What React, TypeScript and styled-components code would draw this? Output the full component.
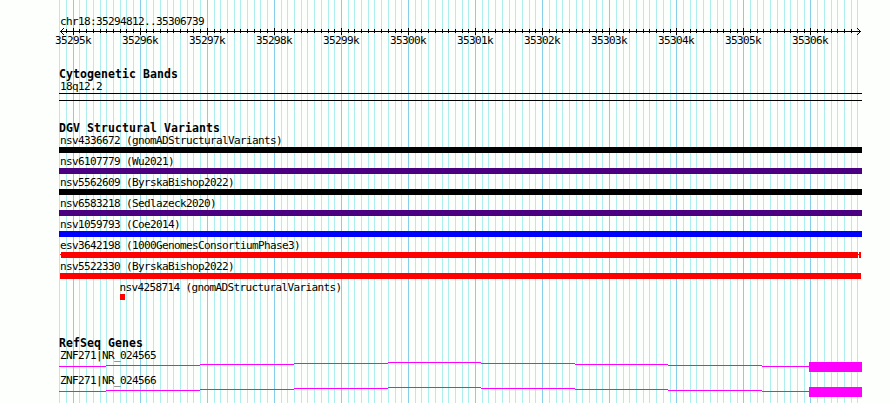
import React from "react";
import styled, { createGlobalStyle } from "styled-components";

const GlobalStyle = createGlobalStyle`
  body { margin: 0; background: #fdfffc; }
`;

const Browser = styled.main`
  position: relative;
  box-sizing: border-box;
  width: 890px;
  height: 403px;
  padding-top: 15px;
  overflow: hidden;
  background: #fdfffc;
  color: #000;
  font-family: "DejaVu Sans Mono", "Liberation Mono", monospace;
`;

const GridLines = styled.svg`
  position: absolute;
  inset: 0;
`;

const Content = styled.div`
  position: relative;
  width: 803px;
  margin-left: 59px;
`;

const Label = styled.div<{ $indent?: number }>`
  height: 13px;
  padding-left: ${(p) => p.$indent ?? 1}px;
  font-size: 11px;
  line-height: 13px;
  letter-spacing: -0.622px;
  white-space: pre;
`;

const Heading = styled.h2`
  height: 12px;
  margin: 0;
  font-size: 11.5px;
  font-weight: 700;
  line-height: 13px;
  letter-spacing: 0.077px;
  white-space: pre;
`;

const Drawing = styled.svg`
  display: block;
  overflow: visible;
`;

const Scale = styled.header`
  height: 53px;
`;

const RegionName = styled(Label)`
  height: 12px;
`;

const ScaleLabels = styled.div`
  display: grid;
  grid-template-columns: repeat(12, 67px);
  margin-left: -5px;
  margin-top: -2px;
`;

const Track = styled.section<{ $height: number }>`
  height: ${(p) => p.$height}px;
`;

const Band = styled.div`
  height: 6px;
  border: solid #000;
  border-width: 1px 0;
`;

const VariantRow = styled.div`
  height: 21px;
`;

const Bar = styled.div<{ $color: string; $start: number; $width: number }>`
  width: ${(p) => p.$width}px;
  height: 6px;
  margin-left: ${(p) => p.$start}px;
  background: ${(p) => p.$color};
`;

const SplitBar = styled.div`
  display: flex;
  height: 6px;
  margin-left: 1px;
`;

const Piece = styled.div<{ $width: number; $thin?: boolean }>`
  width: ${(p) => p.$width}px;
  height: ${(p) => (p.$thin ? 1 : 6)}px;
  margin-top: ${(p) => (p.$thin ? 2 : 0)}px;
  background: #f00;
`;

const GeneRow = styled.div`
  height: 25px;
`;

const ORIGIN = 73.18;
const STEP = 6.7065;
const ticks = Array.from({ length: 120 }, (_, i) => i - 2).map((k) => ({
  x: Math.floor(ORIGIN + k * STEP),
  major: k % 10 === 0,
}));

const variants = [
  { name: "nsv4336672 (gnomADStructuralVariants)", color: "#000", start: 0, width: 803 },
  { name: "nsv6107779 (Wu2021)", color: "#4b0082", start: 0, width: 803 },
  { name: "nsv5562609 (ByrskaBishop2022)", color: "#000", start: 0, width: 803 },
  { name: "nsv6583218 (Sedlazeck2020)", color: "#4b0082", start: 0, width: 803 },
  { name: "nsv1059793 (Coe2014)", color: "#00f", start: 0, width: 803 },
  { name: "esv3642198 (1000GenomesConsortiumPhase3)", split: true, color: "#f00", start: 1, width: 801 },
  { name: "nsv5522330 (ByrskaBishop2022)", color: "#f00", start: 1, width: 801 },
  { name: "nsv4258714 (gnomADStructuralVariants)", color: "#f00", start: 61, width: 5, indent: 60.5 },
];

// Each intron segment: start, end and height of its step.
const introns = [
  [0, 47, 4],
  [47, 141, 3],
  [141, 235, 2],
  [235, 329, 1],
  [329, 422, 0],
  [422, 516, 1],
  [516, 609, 2],
  [609, 703, 3],
  [703, 750, 4],
];

function Grid() {
  return (
    <GridLines width="890" height="403" shapeRendering="crispEdges">
      {ticks.map(({ x, major }) => (
        <rect key={x} x={x} y="0" width="1" height="403" fill={major ? "#87ceeb" : "#afeeee"} />
      ))}
    </GridLines>
  );
}

function Ruler() {
  return (
    <Drawing width="803" height="9" shapeRendering="crispEdges">
      <rect x="1" y="4" width="801" height="1" />
      {ticks.slice(1, -1).map(({ x, major }) => (
        <rect key={x} x={x - 59} y={major ? 1 : 2} width="1" height={major ? 7 : 4} />
      ))}
      <path d="M2 3h1v1h-1zM3 2h1v1h-1zM4 1h1v1h-1zM2 5h1v1h-1zM3 6h1v1h-1zM4 7h1v1h-1z" />
      <path d="M800 3h1v1h-1zM799 2h1v1h-1zM798 1h1v1h-1zM800 5h1v1h-1zM799 6h1v1h-1zM798 7h1v1h-1z" />
    </Drawing>
  );
}

export default function App() {
  return (
    <>
      <GlobalStyle />
      <Browser>
        <Grid />
        <Content>
          <Scale>
            <RegionName>chr18:35294812..35306739</RegionName>
            <Ruler />
            <ScaleLabels>
              {Array.from({ length: 12 }, (_, i) => (
                <Label key={i}>{`${35295 + i}k`}</Label>
              ))}
            </ScaleLabels>
          </Scale>
          <Track $height={54}>
            <Heading>Cytogenetic Bands</Heading>
            <Label>18q12.2</Label>
            <Band />
          </Track>
          <Track $height={215}>
            <Heading>DGV Structural Variants</Heading>
            {variants.map((v) => (
              <VariantRow key={v.name}>
                <Label $indent={v.indent}>{v.name}</Label>
                {v.split ? (
                  <SplitBar>
                    <Piece $width={1} $thin />
                    <Piece $width={797} />
                    <Piece $width={1} $thin />
                    <Piece $width={2} />
                  </SplitBar>
                ) : (
                  <Bar $color={v.color} $start={v.start} $width={v.width} />
                )}
              </VariantRow>
            ))}
          </Track>
          <Track $height={63}>
            <Heading>RefSeq Genes</Heading>
            {["ZNF271|NR_024565", "ZNF271|NR_024566"].map((name) => (
              <GeneRow key={name}>
                <Label>{name}</Label>
                <Drawing width="803" height="10" fill="#f0f" shapeRendering="crispEdges">
                  {introns.map(([from, to, y]) => (
                    <rect key={from} x={from} y={y} width={to - from} height="1" />
                  ))}
                  <rect x="750" y="0" width="53" height="10" />
                </Drawing>
              </GeneRow>
            ))}
          </Track>
        </Content>
      </Browser>
    </>
  );
}
